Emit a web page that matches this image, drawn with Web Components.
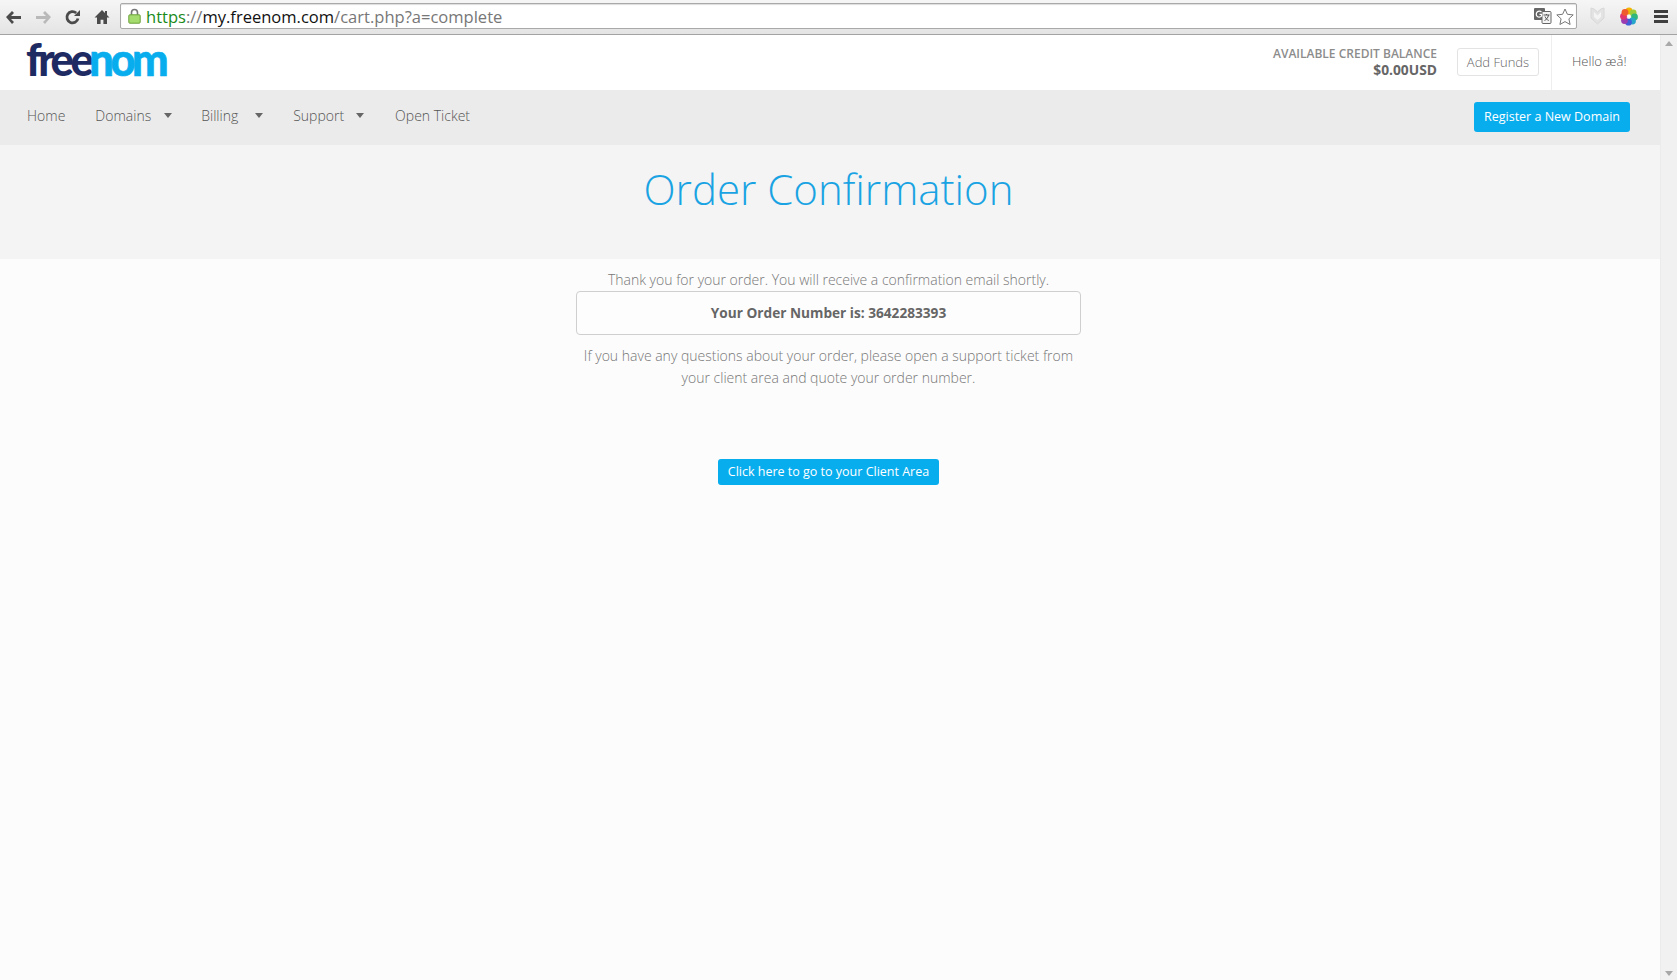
<!DOCTYPE html>
<html><head><meta charset="utf-8"><style>
html,body{margin:0;height:100%;overflow:hidden;background:#fcfcfc}
body{font-family:"Open Sans",sans-serif;display:flex;flex-direction:column;height:980px}
</style></head><body>
<browser-toolbar></browser-toolbar>
<page-frame>
<site-header></site-header>
<site-nav></site-nav>
<page-title>Order Confirmation</page-title>
<order-content></order-content>
</page-frame>
<script>
function def(name,html){customElements.define(name,class extends HTMLElement{constructor(){super();this.attachShadow({mode:'open'}).innerHTML=html}})}
def('browser-toolbar',`<style>
:host{display:flex;align-items:center;height:34px;border-bottom:1px solid #a3a3a3;background:linear-gradient(#f6f6f6,#e4e4e4);flex:none;font-family:"Open Sans",sans-serif}
svg{display:block;flex:none}
.nav{display:flex;align-items:center;padding-left:5px;width:120px;box-sizing:border-box;gap:12px}
.omni{flex:none;width:1457px;height:26px;margin-bottom:2px;box-sizing:border-box;border:1px solid #a9a9a9;border-radius:2px;background:#fff;display:flex;align-items:center;padding:0 2px 0 7px;box-shadow:inset 0 1px 1px #ddd}
.url{font-size:16.55px;margin-left:5px;color:#777;white-space:nowrap;flex:1}
.g{color:#1a8a1a}.d{color:#111}
.ext{display:flex;align-items:center;flex:1;padding-left:13px;margin-bottom:2px}
</style>
<div class="nav">
<svg width="17" height="16" viewBox="0 0 17 16"><path d="M1 8l6-6 2 2-3 3h10v3H6l3 3-2 2z" fill="#4b4b4b"/></svg>
<svg width="18" height="16" viewBox="0 0 18 16"><path d="M17 8l-6-6-2 2 3 3H2v3h10l-3 3 2 2z" fill="#b9b9b9"/></svg>
<svg width="17" height="16" viewBox="0 0 17 16"><path d="M14 9.500A5.600 5.600 0 1 1 12.200 4" fill="none" stroke="#4b4b4b" stroke-width="2.800"/><path d="M10 7h6V1z" fill="#4b4b4b"/></svg>
<svg style="margin-left:1px" width="16" height="16" viewBox="0 0 16 16"><path d="M8 1L.5 8.500H3V15h3.600v-4.200h2.800V15H13V8.500h2.500L13 6V2h-2v2z" fill="#4b4b4b"/></svg>
</div>
<div class="omni">
<svg width="13" height="16" viewBox="0 0 13 16"><path d="M3.500 7V4.500a3 3 0 0 1 6 0V7" fill="none" stroke="#777" stroke-width="1.600"/><rect x=".8" y="6.800" width="11.400" height="8.400" rx="1" fill="#a5dc6f" stroke="#6ca03c"/></svg>
<div class="url"><span class="g">https</span>://<span class="d">my.freenom.com</span>/cart.php?a=complete</div>
<svg width="18" height="16" viewBox="0 0 18 16"><rect x="0" y="0" width="11" height="12" rx="1" fill="#666"/><rect x="8" y="3.500" width="9" height="12" rx="1" fill="#f4f4f4" stroke="#666"/><path d="M9.500 7h6M12.500 6v1M14.500 7c-.5 3-2 4.500-4 5.500M11 8.500c.8 2 2 3.200 3.800 4" fill="none" stroke="#555"/><path d="M7.500 4.200A3 3 0 1 0 7.500 8.200V6.300H5.500" fill="none" stroke="#fff" stroke-width="1.200"/></svg>
<svg style="margin-left:4px" width="18" height="17" viewBox="0 0 18 17"><path d="M9 1l2.400 5.300 5.800.6-4.300 3.900 1.200 5.700L9 13.600 3.900 16.500l1.200-5.700L.8 6.900l5.800-.6z" fill="#fff" stroke="#777"/></svg>
</div>
<div class="ext">
<svg width="15" height="18" viewBox="0 0 15 18"><path d="M1 1l3 1 3.500 3L11 2l3-1v10l-6.500 6L1 11z" fill="#e3e3e3" stroke="#d8d8d8"/><path d="M4 5v5l3.500 3L11 10V5L7.500 8.500z" fill="#f4f4f4"/></svg>
<svg style="margin-left:15px" width="18" height="19" viewBox="0 0 18 19"><circle cx="9" cy="4" r="3.400" fill="#f4b400"/><circle cx="13.200" cy="5.800" r="3.400" fill="#9ccc3c"/><circle cx="14.500" cy="10" r="3.400" fill="#2fb67c"/><circle cx="12.500" cy="14" r="3.400" fill="#26a6c9"/><circle cx="8.500" cy="15.200" r="3.400" fill="#3f5fd9"/><circle cx="4.500" cy="13.500" r="3.400" fill="#9b3db0"/><circle cx="3.500" cy="9.300" r="3.400" fill="#e2366f"/><circle cx="5" cy="5.300" r="3.400" fill="#ef5b2c"/><circle cx="9" cy="9.500" r="1.300" fill="#fff"/></svg>
<svg style="margin-left:16px" width="14" height="13" viewBox="0 0 14 13"><path d="M0 0h14v3H0zM0 5h14v3H0zM0 10h14v3H0z" fill="#3f3f3f"/></svg>
</div>`);
def('page-frame',`<style>
:host{display:flex;flex:1;min-height:0}
.main{flex:none;width:1660px;display:flex;flex-direction:column;min-height:0;background:#fcfcfc}
.bar{flex:1;background:#f1f1f1;border-left:1px solid #ebebeb;display:flex;flex-direction:column;justify-content:space-between;align-items:center;padding:6px 0 4px}
i{display:block;width:0;height:0;border:4px solid transparent}
.u{border-bottom:5px solid #a8a8a8;border-top:0}.w{border-top:5px solid #a8a8a8;border-bottom:0}
</style><div class="main"><slot></slot></div><div class="bar"><i class="u"></i><i class="w"></i></div>`);
def('site-header',`<style>
:host{display:flex;align-items:stretch;height:55px;background:#fff;flex:none;color:#777}
.logo{font-family:"Lato",sans-serif;font-weight:900;font-size:45px;line-height:48px;letter-spacing:-3.600px;margin:0 0 0 26px;color:#1e2a62;white-space:nowrap;height:48px;transform:scaleX(.965);transform-origin:left}
.logo b{font-weight:900;color:#08adee;margin-left:-1px;-webkit-text-stroke:.6px #08adee}
.sp{flex:1}
.credit{text-align:right;font-size:12px;line-height:17px;padding-top:10px;font-weight:600;color:#8c8c8c}
.credit b{display:block;font-size:13.800px;line-height:16px;color:#666;font-weight:700}
.add{align-self:flex-start;margin:13px 12px 0 20px;box-sizing:border-box;width:82px;height:28px;border:1px solid #e3e3e3;border-radius:3px;font-size:13px;line-height:26px;text-align:center;font-weight:300;color:#666}
.hello{border-left:1px solid #eee;width:109px;box-sizing:border-box;padding:15px 0 0 20px;font-size:13px;line-height:22px;font-weight:300;color:#555}
</style>
<div class="logo">free<b>nom</b></div><div class="sp"></div>
<div class="credit">AVAILABLE CREDIT BALANCE<b>$0.00USD</b></div>
<div class="add">Add Funds</div>
<div class="hello">Hello æå!</div>`);
def('nav-item',`<style>
:host{display:flex;align-items:center;font-size:14px;font-weight:300;color:#555;gap:var(--gap,13px);margin-right:var(--mr,30px);white-space:nowrap}
i{display:none;width:0;height:0;border:4px solid transparent;border-top:5px solid #666;border-bottom:0}
:host([menu]) i{display:block}
</style><slot></slot><i></i>`);
def('site-nav',`<style>
:host{display:flex;align-items:center;height:55px;box-sizing:border-box;background:#ebebeb;flex:none;padding:0 30px 4px 27px}
.sp{flex:1}
.btn{box-sizing:border-box;width:156px;height:30px;margin-top:3px;background:#08adee;color:#fff;border-radius:3px;font-size:12.500px;line-height:30px;text-align:center;font-weight:400}
</style><nav-item>Home</nav-item><nav-item menu style="--mr:29px">Domains</nav-item><nav-item menu style="--gap:17px">Billing</nav-item><nav-item menu style="--gap:12px;--mr:31px">Support</nav-item><nav-item>Open Ticket</nav-item><div class="sp"></div><div class="btn">Register a New Domain</div>`);
def('page-title',`<style>
:host{display:block;height:114px;background:#f4f4f4;flex:none;box-sizing:border-box;padding:14px 3px 0 0;text-align:center;font-size:42px;line-height:60px;font-weight:300;color:#1aa3e3}
</style><slot></slot>`);
def('order-content',`<style>
:host{display:flex;flex-direction:column;align-items:center;padding:10px 3px 0 0;color:#777;font-size:14px;font-weight:300;line-height:22px;text-align:center}
.box{box-sizing:border-box;width:505px;height:44px;margin:0 0 10px;border:1px solid #cfcfcf;border-radius:4px;background:#fdfdfd;font-size:13.650px;font-weight:700;color:#666;line-height:42px}
.p{width:505px}
.btn{margin-top:70px;box-sizing:border-box;width:221px;height:26px;background:#08adee;color:#fff;border-radius:3px;font-size:12.500px;line-height:26px;font-weight:400}
</style>
<div>Thank you for your order. You will receive a confirmation email shortly.</div>
<div class="box">Your Order Number is: 3642283393</div>
<div class="p">If you have any questions about your order, please open a support ticket from<br>your client area and quote your order number.</div>
<div class="btn">Click here to go to your Client Area</div>`);
</script>
</body></html>
